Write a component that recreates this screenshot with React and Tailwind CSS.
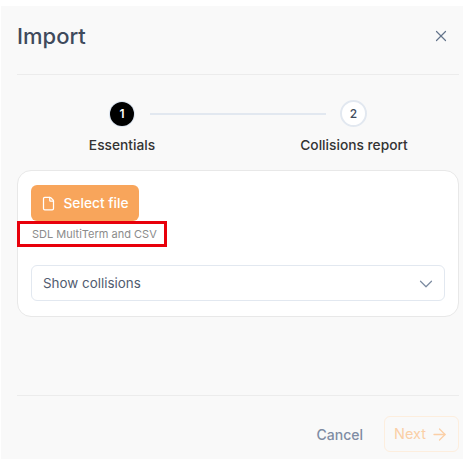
import React from 'react';
import { X, File, ChevronDown, ArrowRight } from 'lucide-react';

const App = () => {
    return (
        <div className="w-[463px] h-[459px] bg-white pt-[6px] pl-px overflow-hidden font-['Inter',sans-serif]">
            <div className="h-[453px] bg-[#f9f9f9] pl-4 pr-[4px] flex flex-col">
                {/* header */}
                <div className="h-[69px] shrink-0 border-b border-[#ececec] flex items-center justify-between pb-[8px]">
                    <h1 className="text-[22px] font-medium text-[#3f4a5c] leading-none">Import</h1>
                    <X className="w-[18px] h-[18px] text-[#64748b] mr-[9px]" strokeWidth={1.6} />
                </div>

                {/* stepper */}
                <div className="h-[95px] shrink-0 pt-[25px]">
                    <div className="h-[27px] flex items-center pl-[93px]">
                        <div className="w-[24px] h-[24px] shrink-0 rounded-full bg-black text-white text-[12px] font-semibold flex items-center justify-center shadow-[0_0_0_1px_#dbe4f0]">1</div>
                        <div className="h-[2px] w-[176px] ml-[16px] bg-[#e2e8f0] shrink-0" />
                        <div className="w-[27px] h-[27px] ml-[14px] shrink-0 rounded-full border-2 border-[#e2e8f0] bg-white text-[#3f4a5c] text-[12px] font-medium flex items-center justify-center">2</div>
                    </div>
                    <div className="mt-[8px] flex pl-[40px] gap-[102px]">
                        <span className="w-[130px] text-center text-[13.75px] font-medium text-[#333] leading-5">Essentials</span>
                        <span className="w-[130px] text-center text-[13.75px] font-medium text-[#333] leading-5 whitespace-nowrap">Collisions report</span>
                    </div>
                </div>

                {/* card */}
                <div className="h-[147px] shrink-0 bg-white border border-[#e8e8e8] rounded-[14px] pt-[14px] px-[13px]">
                    <button className="w-[108px] h-[36px] pt-px bg-[#f8a55b] rounded-[6px] text-white text-[13.75px] font-medium flex items-center justify-center gap-[7px]">
                        <File className="w-[15px] h-[15px]" strokeWidth={2} />
                        Select file
                    </button>
                    <div className="-ml-[14px] w-[150px] h-[26px] border-[3px] border-[#e8000b] flex items-center pl-[12px] text-[11px] text-[#8b8b8b] whitespace-nowrap">SDL MultiTerm and CSV</div>
                    <div className="mt-[18px] h-[36px] pt-px border border-[#e2e8f0] rounded-[6px] flex items-center justify-between pl-[11px] pr-[7px]">
                        <span className="text-[13.4px] text-[#515c6f]">Show collisions</span>
                        <ChevronDown className="w-[22px] h-[22px] text-[#7b8aa0]" strokeWidth={1.3} />
                    </div>
                </div>

                {/* footer */}
                <div className="mt-[78px] h-[58px] shrink-0 border-t border-[#ececec] flex items-start justify-end pt-[20px] gap-[21px]">
                    <button className="h-[36px] text-[14px] font-medium text-[#7f8ca3]">Cancel</button>
                    <button className="w-[75px] h-[36px] border border-[#fdeede] rounded-[6px] text-[14.5px] font-normal text-[#fbcfa6] flex items-center justify-center gap-[4px]">
                        Next
                        <ArrowRight className="w-[19px] h-[19px]" strokeWidth={1.6} />
                    </button>
                </div>
            </div>
        </div>
    );
};

export default App;
